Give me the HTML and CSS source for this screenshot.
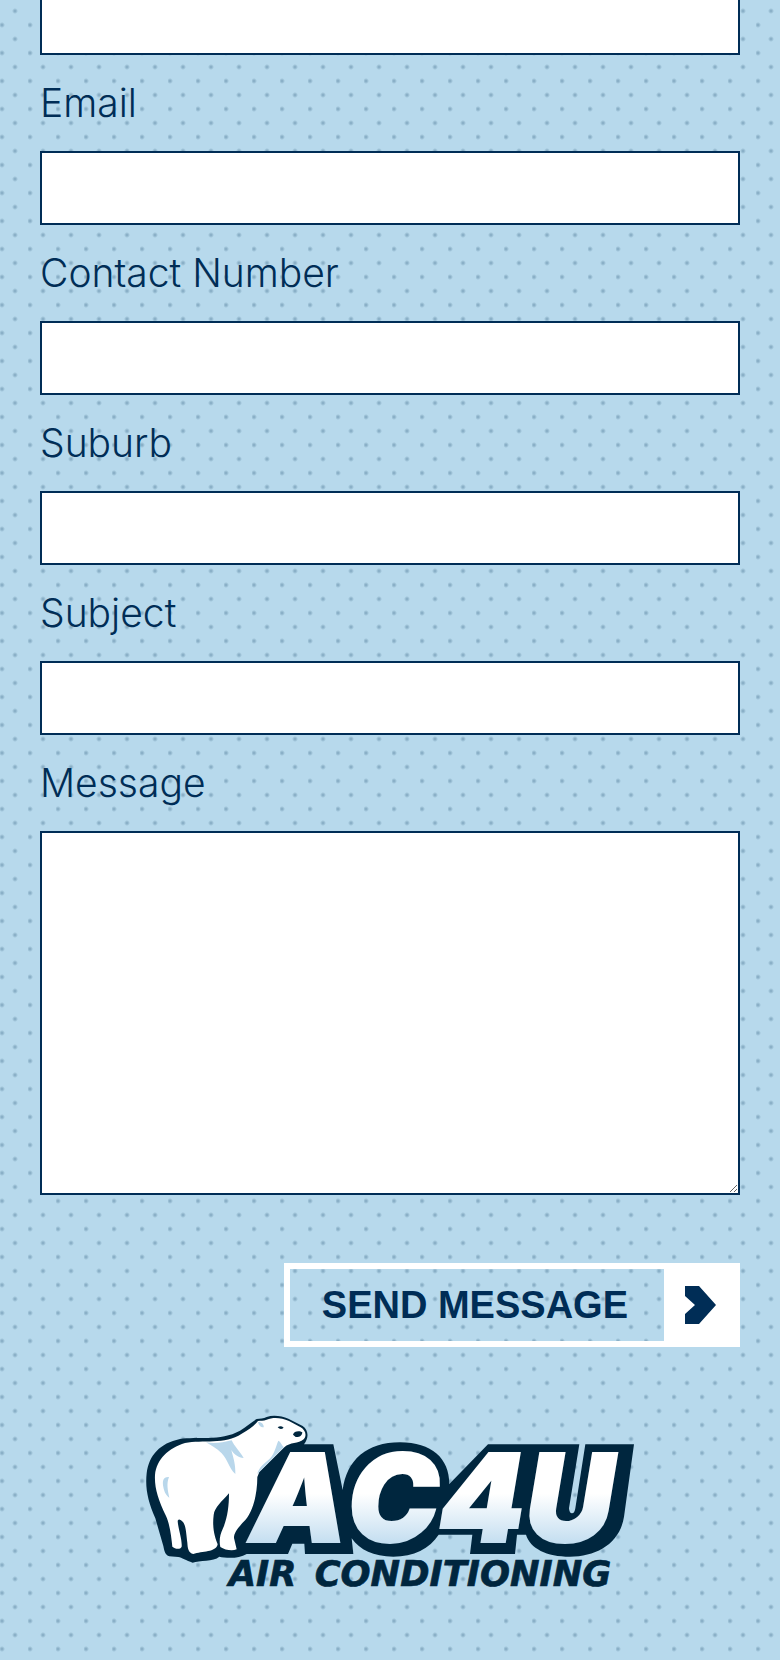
FILE: index.html
```html
<!DOCTYPE html>
<html lang="en">
<head>
<meta charset="utf-8">
<meta name="viewport" content="width=device-width, initial-scale=1">
<title>AC4U Air Conditioning</title>
<link rel="stylesheet" href="styles.css">
</head>
<body>
<main class="page">
  <form class="contact-form">
    <input class="field" type="text" aria-label="Name">
    <label class="label" for="email">Email</label>
    <input class="field" id="email" type="email">
    <label class="label" for="phone">Contact Number</label>
    <input class="field" id="phone" type="tel">
    <label class="label" for="suburb">Suburb</label>
    <input class="field" id="suburb" type="text">
    <label class="label" for="subject">Subject</label>
    <input class="field" id="subject" type="text">
    <label class="label" for="message">Message</label>
    <textarea class="field message" id="message"></textarea>
    <button class="send" type="submit">
      <span class="send-text">SEND MESSAGE</span>
      <span class="send-icon">
        <svg class="chevron" viewBox="0 0 31 38" aria-hidden="true"><path d="M0 0H14L31 19L14 38H0V28L10 19L0 10Z"/></svg>
      </span>
    </button>
  </form>
  <footer class="footer">
    <svg class="logo" viewBox="0 0 1560 600" role="img" aria-label="AC4U Air Conditioning">
      <defs>
        <linearGradient id="ice" gradientUnits="userSpaceOnUse" x1="0" y1="155" x2="0" y2="435">
          <stop offset="0.45" stop-color="#fff"/>
          <stop offset="1" stop-color="#c2ddf0"/>
        </linearGradient>
      </defs>
      <path class="ink" d="M380 57C390 55 400 57 410 51C430 44 455 48 475 56L518 78C535 90 538 112 522 133H610L638 270C650 180 710 127 810 127C905 127 958 175 958 252L1074 133H1348L1317 325Q1318 340 1326 340Q1334 340 1336 325L1366 133H1512L1482 350C1470 430 1400 470 1320 470C1250 470 1200 445 1188 404H1161L1155 462H1020L1027 404H926C900 445 850 470 790 470C730 470 690 450 665 415L670 462H525L523 431H487L474 462H350C325 478 285 474 268 470C250 486 208 480 188 488C168 482 155 472 145 471L118 469C105 465 103 452 100 438L76 355C54 305 45 265 50 220C57 165 90 130 150 117C200 108 270 125 330 92C350 80 365 66 380 57Z"/>
      <text class="word" x="360 652 926 1186" y="427">AC4U</text>
      <path class="fur" d="M384 63C392 61 400 64 410 59C432 50 455 54 477 63L512 82C527 91 531 107 521 118C505 132 480 126 463 142L388 216L382 231C382 285 368 335 346 360C325 382 312 397 312 414L320 448C307 454 284 450 271 441C267 424 269 405 279 385C292 355 297 320 297 280C276 304 254 322 251 345C246 385 255 413 263 433C258 458 216 453 190 462C175 458 173 445 172 428C169 404 168 377 159 366Q148 353 143 362C144 386 157 418 155 440C150 450 135 447 127 440C124 412 120 374 108 348C84 298 73 263 75 225C80 177 115 145 165 129C218 118 284 135 335 101C359 88 372 78 384 63Z"/>
      <g class="shade">
        <path d="M228 127C253 132 278 128 305 121C312 138 330 154 341 174C325 173 313 164 304 150C310 175 317 192 316 222C297 206 293 178 275 160C260 144 243 136 228 127Z"/>
        <path d="M445 122C453 125 454 136 462 141L388 216L382 222C386 205 400 192 414 181C434 164 436 143 445 122Z"/>
        <path d="M117 231C98 230 97 244 100 261C103 278 110 288 118 293C113 270 109 252 117 231Z"/>
        <path d="M384 66C394 65 402 73 401 82C391 82 386 75 384 66Z"/>
      </g>
      <path class="ink" d="M443 82Q452 75 461 83Q452 91 443 82ZM489 104C491 92 510 91 517 97C516 109 507 112 497 111Z"/>
      <text class="tagline" y="559"><tspan x="296">AIR</tspan> <tspan x="554">CONDITIONING</tspan></text>
    </svg>
  </footer>
</main>
</body>
</html>
```
FILE: styles.css
```css
* { box-sizing: border-box; }

body {
  margin: 0;
  color: #002d56;
  font-family: "Liberation Sans", Arial, sans-serif;
  background-color: #b7d9ec;
  background-image:
    radial-gradient(circle at 15px 11px, #7fa6c0 0, #8fb4cb 1px, transparent 3px),
    radial-gradient(circle at 2px 25px, #7fa6c0 0, #8fb4cb 1px, transparent 3px);
  background-size: 28px 28px;
}

.page {
  padding: 0 40px 60px;
  overflow: hidden;
}

.contact-form {
  display: flex;
  flex-direction: column;
  margin-top: -19px;
}

.label {
  padding: 24px 0 24px;
  font-family: Inter, "Liberation Sans", sans-serif;
  font-weight: 300;
  font-size: 39px;
  line-height: 48px;
}

.field {
  display: block;
  width: 100%;
  height: 74px;
  margin: 0;
  padding: 12px 16px;
  border: 2px solid #002d56;
  border-radius: 0;
  background: #fff;
  color: inherit;
  font: inherit;
  font-size: 36px;
}

.message {
  height: 364px;
  resize: vertical;
}

.send {
  display: flex;
  align-self: flex-end;
  margin: 68px 0 0;
  padding: 0;
  border: 6px solid #fff;
  background: transparent;
  color: inherit;
  font: bold 38px/72px "Liberation Sans", Arial, sans-serif;
}

.send-text { padding: 0 36px 0 32px; }

.send-icon {
  display: flex;
  align-items: center;
  justify-content: center;
  width: 70px;
  padding-left: 2px;
  background: #fff;
}

.chevron {
  width: 31px;
  height: 38px;
  fill: #002d56;
}

.footer {
  display: flex;
  justify-content: center;
  padding-top: 53px;
}

.logo {
  width: 100%;
  max-width: 520px;
}

.ink { fill: #00263e; }
.fur { fill: #fff; }
.shade { fill: #b9d7eb; }

.word {
  fill: url(#ice);
  stroke: url(#ice);
  stroke-width: 6px;
  font: italic 900 368px Inter, "Liberation Sans", sans-serif;
}

.tagline {
  fill: #00263e;
  stroke: #00263e;
  stroke-width: 2px;
  font: italic bold 106px "DejaVu Sans", sans-serif;
}
```
